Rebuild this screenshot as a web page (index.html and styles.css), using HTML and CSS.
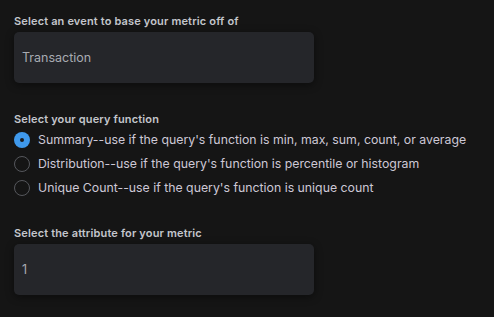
FILE: index.html
```html
<!DOCTYPE html>
<html>
<head>
<meta charset="utf-8">
<link rel="stylesheet" href="styles.css">
</head>
<body>
<div class="page">
  <section class="field">
    <div class="label">Select an event to base your metric off of</div>
    <div class="box">Transaction</div>
  </section>
  <section class="field radios-field">
    <div class="label">Select your query function</div>
    <div class="radios">
      <label class="radio"><span class="dot checked"></span><span>Summary--use if the query's function is min, max, sum, count, or average</span></label>
      <label class="radio"><span class="dot"></span><span>Distribution--use if the query's function is percentile or histogram</span></label>
      <label class="radio"><span class="dot"></span><span>Unique Count--use if the query's function is unique count</span></label>
    </div>
  </section>
  <section class="field attr-field">
    <div class="label">Select the attribute for your metric</div>
    <div class="box">1</div>
  </section>
</div>
</body>
</html>
```
FILE: styles.css
```css
html, body {
  margin: 0;
  background: #151515;
  height: 100%;
}
body {
  font-family: Inter, "Noto Sans", sans-serif;
  overflow: hidden;
}
.page {
  padding: 14px 14px 0 14px;
  display: flex;
  flex-direction: column;
}
.label {
  font-size: 11px;
  font-weight: 600;
  color: #c4c6cc;
  letter-spacing: 0.15px;
  line-height: 14px;
}
.box {
  margin-top: 4px;
  width: 300px;
  height: 51px;
  box-sizing: border-box;
  background: #25262a;
  border-radius: 5px;
  box-shadow: 0 2px 8px rgba(0,0,0,0.45);
  color: #a8abb2;
  font-size: 12.5px;
  display: flex;
  align-items: center;
  padding-left: 8px;
}
.radios-field {
  margin-top: 29px;
}
.radios {
  margin-top: 5px;
  display: flex;
  flex-direction: column;
  gap: 7px;
}
.radio {
  display: flex;
  align-items: center;
  gap: 8px;
  font-size: 12.3px;
  color: #cdc8d6;
  height: 17px;
}
.dot {
  border-radius: 50%;
  border: 1.5px solid #55575c;
  flex: none;
  box-sizing: border-box;
  width: 16px;
  height: 16px;
}
.dot.checked {
  border: none;
  background: #3f99ec;
  position: relative;
}
.dot.checked::after {
  content: "";
  position: absolute;
  left: 6px;
  top: 6px;
  width: 4px;
  height: 4px;
  border-radius: 50%;
  background: #1b1b1d;
}
.attr-field {
  margin-top: 30px;
}
```
